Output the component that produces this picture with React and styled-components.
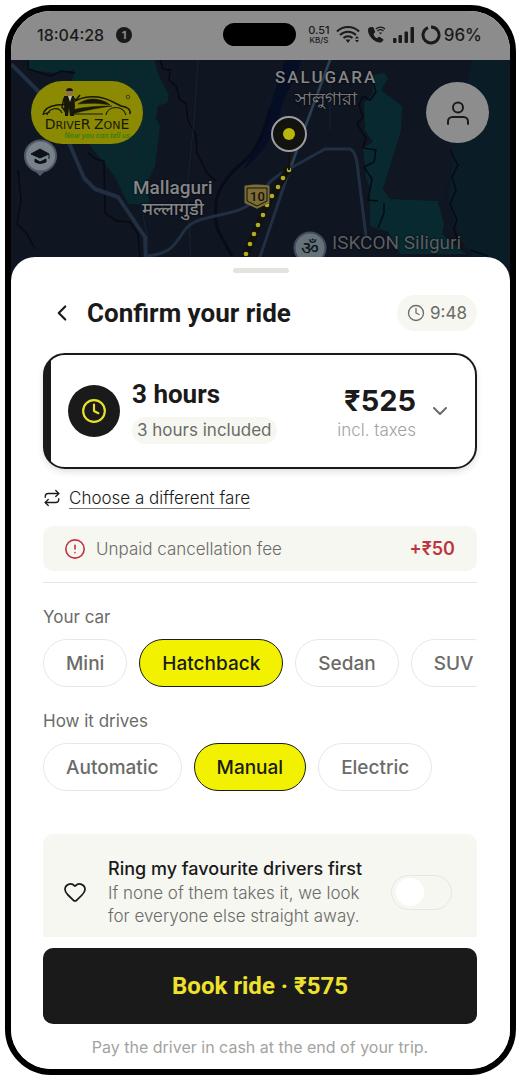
import { useState } from 'react';
import styled, { createGlobalStyle } from 'styled-components';
import { ChevronDown, ChevronLeft, CircleAlert, Clock, Heart, Repeat } from 'lucide-react';

const colours = {
  ink: '#1a1a1a',
  grey: '#6b6b68',
  light: '#a3a3a0',
  line: '#e8e8e2',
  soft: '#f6f7f1',
  yellow: '#f2f200',
  red: '#c0343f',
};

const GlobalStyle = createGlobalStyle`
    * { box-sizing: border-box; }
    body {
        margin: 0;
        background: #fff;
        color: ${colours.ink};
        font-family: Inter, "Noto Sans", sans-serif;
    }
    button, input { font-family: inherit; color: inherit; }
    h1, h2, p { margin: 0; }
`;

const Phone = styled.main`
    display: flex;
    flex-direction: column;
    height: calc(100vh - 10px);
    min-height: 760px;
    margin: 5px;
    border: 6px solid #000;
    border-radius: 46px;
    overflow: hidden;
    background: #fff;
`;

/* status bar */

const StatusBar = styled.header`
    display: grid;
    grid-template-columns: 1fr 73px 1fr;
    align-items: center;
    flex: none;
    height: 49px;
    padding: 0 28px 2px 26px;
    background: #8c8c8c;
    font-weight: 500;
`;

const StatusSide = styled.div`
    display: flex;
    align-items: center;
    justify-content: ${p => (p.$end ? 'flex-end' : 'flex-start')};
    gap: ${p => (p.$end ? '6px' : '12px')};
    font-size: ${p => (p.$end ? '17px' : '16px')};
    white-space: nowrap;
`;

const Island = styled.div`
    height: 23px;
    border-radius: 12px;
    background: #000;
`;

const Count = styled.span`
    width: 16px;
    height: 16px;
    border-radius: 50%;
    background: ${colours.ink};
    color: #8c8c8c;
    font-size: 11px;
    font-weight: 700;
    line-height: 16px;
    text-align: center;
`;

const Speed = styled.span`
    display: flex;
    flex-direction: column;
    align-items: center;
    font-size: 11px;
    line-height: 10px;
    small { font-size: 8px; line-height: 10px; }
`;

const Battery = styled.span`
    display: flex;
    align-items: center;
    gap: 3px;
`;

/* map */

const Map = styled.section`
    position: relative;
    flex: none;
    height: 221px;
    margin-bottom: -24px;
    background: #0f1521;
    overflow: hidden;
`;

const MapArt = styled.svg`
    display: block;
    width: 100%;
    height: 100%;
`;

const Place = styled.div`
    position: absolute;
    left: ${p => p.$x}px;
    top: ${p => p.$y}px;
    color: ${p => (p.$dim ? '#5c5f63' : '#858688')};
    font-family: Roboto, "Noto Sans", sans-serif;
    font-size: 18px;
    font-weight: ${p => (p.$dim ? 400 : 500)};
    line-height: 21px;
    text-align: center;
    text-shadow: 0 0 2px #000;
    white-space: nowrap;
`;

const Area = styled.span`
    font-size: 17px;
    letter-spacing: 2px;
`;

const Town = styled.span`
    font-size: 19px;
`;

const OmSign = styled.span`
    color: #11181d;
    font-size: 19px;
    text-shadow: none;
`;

const RoadNumber = styled.span`
    color: #16140c;
    font-size: 13px;
    text-shadow: none;
`;

const MapBar = styled.div`
    position: absolute;
    inset: 21px 21px auto 20px;
    display: flex;
    justify-content: space-between;
    align-items: center;
`;

const Brand = styled.a`
    display: flex;
    flex-direction: column;
    align-items: center;
    width: 112px;
    height: 63px;
    padding-top: 7px;
    border-radius: 32px;
    background: #8b8a02;
    color: #17170a;
    text-decoration: none;
    svg { display: block; flex: none; }
`;

const BrandName = styled.span`
    font-family: "DejaVu Sans", sans-serif;
    font-size: 11px;
    line-height: 12px;
    white-space: nowrap;
    big { font-size: 14px; line-height: 12px; }
`;

const BrandLine = styled.span`
    align-self: flex-end;
    margin-right: 13px;
    color: #2f7d12;
    font-size: 7px;
    font-style: italic;
    font-weight: 500;
    line-height: 8px;
    white-space: nowrap;
`;

const Profile = styled.button`
    display: grid;
    place-items: center;
    width: 63px;
    height: 61px;
    padding: 0;
    border: 0;
    border-radius: 50%;
    background: #8d8d8e;
`;

/* sheet */

const Sheet = styled.section`
    position: relative;
    display: flex;
    flex-direction: column;
    flex: 1;
    min-height: 0;
    border-radius: 24px 24px 0 0;
    background: #fff;
`;

const Handle = styled.div`
    flex: none;
    width: 56px;
    height: 5px;
    margin: 11px auto 0;
    border-radius: 3px;
    background: #e4e4de;
`;

const Scroll = styled.div`
    flex: 1;
    min-height: 0;
    padding: 22px 33px 0 32px;
    overflow-y: auto;
    scrollbar-width: none;
`;

const Heading = styled.div`
    display: flex;
    align-items: center;
    height: 36px;
`;

const Back = styled.button`
    display: flex;
    margin: 0 12px 0 6px;
    padding: 0;
    border: 0;
    background: none;
`;

const Title = styled.h1`
    flex: 1;
    font-family: Roboto, sans-serif;
    font-size: 26px;
    font-weight: 700;
    line-height: 32px;
`;

const Timer = styled.span`
    display: flex;
    align-items: center;
    gap: 5px;
    height: 36px;
    padding: 0 10px;
    border-radius: 18px;
    background: ${colours.soft};
    color: ${colours.grey};
    font-size: 17px;
`;

const FareCard = styled.button`
    display: flex;
    align-items: center;
    gap: 12px;
    width: 100%;
    height: 116px;
    margin-top: 22px;
    padding: 0 23px;
    border: 2px solid ${colours.ink};
    border-radius: 22px;
    background: linear-gradient(to right, ${colours.ink} 6px, #fff 6px);
    box-shadow: 0 3px 6px rgba(0, 0, 0, 0.12);
    text-align: left;
`;

const FareIcon = styled.span`
    display: grid;
    place-items: center;
    width: 52px;
    height: 52px;
    border-radius: 50%;
    background: ${colours.ink};
    color: #e9e02a;
`;

const FareText = styled.span`
    display: flex;
    flex-direction: column;
    align-items: flex-start;
    gap: 8px;
    flex: 1;
`;

const FareName = styled.span`
    font-family: Roboto, sans-serif;
    font-size: 26px;
    font-weight: 700;
    line-height: 30px;
`;

const Included = styled.span`
    padding: 0 5px;
    border-radius: 14px;
    background: ${colours.soft};
    color: ${colours.grey};
    font-size: 17px;
    line-height: 27px;
    white-space: nowrap;
`;

const Price = styled.span`
    display: grid;
    padding-top: 4px;
    color: ${colours.light};
    font-size: 17px;
    font-weight: 300;
    line-height: 24px;
    text-align: right;
    strong {
        color: ${colours.ink};
        font-size: 29px;
        font-weight: 700;
        line-height: 34px;
    }
`;

const Change = styled.a`
    display: flex;
    align-items: center;
    gap: 8px;
    height: 24px;
    margin-top: 17px;
    color: ${colours.ink};
    font-size: 17px;
    font-weight: 300;
    text-decoration: none;
    span { border-bottom: 1px solid #777; line-height: 20px; }
`;

const Fee = styled.div`
    display: flex;
    align-items: center;
    gap: 10px;
    height: 45px;
    margin-top: 16px;
    padding: 0 22px 0 21px;
    border-radius: 10px;
    background: ${colours.soft};
    color: ${colours.grey};
    font-size: 17px;
    font-weight: 300;
    svg { color: ${colours.red}; }
    strong {
        margin-left: auto;
        color: ${colours.red};
        font-size: 18px;
        font-weight: 600;
    }
`;

const Group = styled.fieldset`
    min-width: 0;
    margin: 22px 0 0;
    padding: 0;
    border: 0;
    legend {
        padding: 0;
        color: ${colours.grey};
        font-size: 17px;
        line-height: 24px;
    }
`;

const Rule = styled.hr`
    margin: 11px 0 0;
    border: 0;
    border-top: 1px solid ${colours.line};
`;

const Chips = styled.div`
    display: flex;
    gap: 12px;
    margin-top: 10px;
    overflow-x: auto;
    scrollbar-width: none;
`;

const Chip = styled.button`
    flex: none;
    height: 48px;
    padding: 0 22px;
    border: 1px solid ${p => (p.$on ? colours.ink : colours.line)};
    border-radius: 24px;
    background: ${p => (p.$on ? colours.yellow : '#fff')};
    color: ${p => (p.$on ? colours.ink : colours.grey)};
    font-size: 19px;
    font-weight: 500;
`;

const Favourite = styled.label`
    display: flex;
    align-items: center;
    gap: 21px;
    margin-top: 43px;
    padding: 22px 25px 22px 20px;
    border-radius: 10px;
    background: ${colours.soft};
    svg { flex: none; }
`;

const FavText = styled.span`
    flex: 1;
    color: ${colours.grey};
    font-size: 17px;
    font-weight: 300;
    line-height: 23px;
    strong {
        display: block;
        color: ${colours.ink};
        font-size: 18px;
        font-weight: 500;
        line-height: 26px;
        white-space: nowrap;
    }
`;

const Toggle = styled.input`
    appearance: none;
    display: flex;
    align-items: center;
    flex: none;
    width: 61px;
    height: 35px;
    margin: 0;
    padding: 0 4px;
    border: 1px solid #e6e7e0;
    border-radius: 18px;
    &::before {
        content: '';
        width: 28px;
        height: 28px;
        border-radius: 50%;
        background: #fff;
    }
    &:checked { justify-content: flex-end; background: ${colours.yellow}; }
`;

const Footer = styled.footer`
    flex: none;
    padding: 11px 33px 10px 32px;
    text-align: center;
    p {
        margin-top: 11px;
        color: ${colours.light};
        font-size: 16px;
        line-height: 24px;
        white-space: nowrap;
    }
`;

const Book = styled.button`
    width: 100%;
    height: 76px;
    border: 0;
    border-radius: 10px;
    background: ${colours.ink};
    && { color: #eee22c; }
    font-family: Roboto, sans-serif;
    font-size: 24px;
    font-weight: 700;
`;

const route = [[289, 170], [283, 178], [278, 187], [272, 196], [267, 205], [263, 215], [258, 225], [254, 234], [250, 244], [246, 254]];

function Wifi() {
  return (
    <svg width="25" height="19" viewBox="0 0 25 19" fill="none" stroke={colours.ink} strokeWidth="2">
      <path d="M1 6.5C7 .5 17 .5 23 6.5M4 10c4.500-4.500 11.500-4.500 16 0M7.500 13c2.500-2.500 6.500-2.500 9 0" />
      <path d="M9.500 14.500h5L12 18zM19 13.500l2-2.500 2 2.500zM19 15l2 2.500 2-2.500z" fill={colours.ink} stroke="none" />
    </svg>
  );
}

function Call() {
  return (
    <svg width="19" height="19" viewBox="0 0 19 19" fill="none" stroke={colours.ink}>
      <path d="M2 3C0 8 5 16 12 17c2 .4 4-.8 4-2.500L12 12l-2 1.800C8 12.800 6.500 11 6 9l1.700-2L6 2.500z" fill={colours.ink} />
      <path d="M9 4c2.500-2.500 6.500-2.500 9 0M10.500 6c2-1.700 4-1.700 6 0" strokeWidth="1.200" />
      <path d="M12 7.500h3l-1.500 2z" fill={colours.ink} stroke="none" />
    </svg>
  );
}

function Signal() {
  return (
    <svg width="23" height="18" viewBox="0 0 23 18" fill={colours.ink}>
      <rect x="1" y="12" width="3.500" height="5" rx="1" />
      <rect x="6.500" y="9" width="3.500" height="8" rx="1" />
      <rect x="12.500" y="5.500" width="3.500" height="11.500" rx="1" />
      <rect x="18.500" y="1" width="3.500" height="16" rx="1" />
    </svg>
  );
}

function Car() {
  return (
    <svg width="92" height="30" viewBox="0 0 92 30" fill="none" stroke="#17170a">
      <path d="M2 27c1-6 6-9 14-10l14-1c8-7 18-8 27-7 10 1 16 6 23 9 6 1 10 3 9 8" strokeWidth="1.500" />
      <path d="M37 16c7-5 15-6 22-4 5 1 8 3 10 5-10-2-21-2-32-1zM31 22c12-3 24-4 40-4-14 2-26 4-40 8z" fill="#17170a" strokeWidth=".5" />
      <path d="M6 27c2-7 12-9 15-2M65 27c2-10 17-10 20 0M31 26h31M3 26l6-2" strokeWidth="1.100" />
      <path d="M30 9l5 3 4-5M23 10l-2 9 3 4V10" strokeWidth="1.500" />
      <path d="M23 8h10l1 10-1 10h-4l-1-8-1 8h-3z" fill="#17170a" stroke="none" />
      <path d="M27 8h4l-2 6z" fill="#b9b9ae" stroke="none" />
      <circle cx="28.500" cy="4" r="3.500" fill="#936a55" stroke="none" />
      <path d="M25 3c0-4 7-4 7 0z" fill="#17170a" stroke="none" />
      <circle cx="87" cy="9" r="1.800" strokeWidth=".6" />
    </svg>
  );
}

function MapDrawing() {
  return (
    <MapArt viewBox="11 60 499 221" preserveAspectRatio="xMidYMin slice" fill="none" aria-hidden="true">
      <path d="M28 60v10l27 3 20-3-4 12 6 45 15 21 23 29 13 27 22 1-4-20 9-19 5-40-4-7 2-13 9-3 2-8-9-17-6-18z" fill="#08282e" />
      <path d="M472 60l-9 40-10 50-5 50 12 40 20 25h40V60z" fill="#0a1c25" />
      <path d="M372 75l12-2 4 5-7 12 21 16-1 25-18 58 7 10 48 2 6 24-2 9 24 20h-66l-12-22-18-6V188l-4-10-3-30 10-6-8-12-1-27 9-10z" fill="#08292f" />
      <path d="M402 131l40-11 20-10-12 60-6 30-54-2-7-9z" fill="#101622" />
      <path d="M285 60h16c-5 21-15 30-20 50-7 28-18 42-38 60 12-20 22-40 26-60z" fill="#060e26" />
      <path d="M270 110c-8 28-14 42-29 54-12 10-22 22-25 38-1 12-1 24 4 32l12 22" stroke="#070c1a" strokeWidth="3" />
      <g stroke="#060a13" strokeWidth="1.500">
        <path d="M88 153l8 6 8 2 1 52 12 8 13 1 8 12 2 23" />
        <path d="M28 60v9l23 7 10-5 14 2" />
        <path d="M160 60l3 9 7 1-1 10 7 6 4 14 6 3 2 18 8 14 1 18 10 20 9 8" />
        <path d="M18 170l3 30-4 24 10 10 8 15" />
        <path d="M372 78l4 14-6 8-7-4-4 9 4 12-6 7 9 14-3 10 13 2-2 12-10 5 8 12-4 21 10 1M384 203v10l-6 15" />
        <path d="M450 150l8 15-6 12 4 13-6 14 7 16-3 9 5 14M470 250l18 6" />
      </g>
      <path d="M128 65l-1 30 4 60 18 90M198 60l-4 60-7 70 4 68M330 80v50" stroke="#182234" />
      <g stroke="#202f42" strokeLinejoin="round">
        <path d="M11 64l27 27 15 29 17 25 14 33 11 11 23 8 27 40 2 45" strokeWidth="4" />
        <path d="M147 256c20-2 26-7 37-25 10-14 25-12 55-21 22-8 22-28 50-41l36-20h25c5 2 7 10 8 22l8 65" strokeWidth="3" />
        <path d="M330 60l-40 108-32 95" strokeWidth="3" />
      </g>
      <path d="M330 60l-26 70-12 35" stroke="#2d4355" strokeWidth="2" />
      <path d="M289 168l-22 37-13 29-10 26" stroke="#11120d" strokeWidth="7" />
      {route.map(([x, y]) => <circle key={y} cx={x} cy={y} r="2.300" fill="#b3ad25" />)}
      <path d="M289 150v20" stroke="#11120d" strokeWidth="2" />
      <circle cx="289" cy="134" r="17" fill="#12120e" stroke="#9c9ca2" strokeWidth="2" />
      <circle cx="289" cy="134" r="6" fill="#b9b60c" />
      <path d="M246 187q11-2 22 0v15l-11 5-11-5z" fill="#7b6d36" stroke="#7b6d36" strokeWidth="3" />
      <path d="M247 188h20v13l-10 5-10-5z" stroke="#17150d" />
      <path d="M25 162l15 14 15-14z" fill="#515768" />
      <circle cx="40.500" cy="156" r="15.500" fill="#778389" stroke="#515768" strokeWidth="2" />
      <path d="M31 154l9-5 9 5-9 4zM35 159v3q5 3 11 0v-3l-6 3zM49 154v5" fill="#0d1218" stroke="#0d1218" />
      <circle cx="310" cy="248" r="15.500" fill="#66727a" stroke="#414b5a" strokeWidth="2" />
    </MapArt>
  );
}

function ChipGroup({ label, options, value, onPick }) {
  return (
    <Group>
      <legend>{label}</legend>
      <Chips>
        {options.map(option => (
          <Chip key={option} type="button" $on={option === value} aria-pressed={option === value} onClick={() => onPick(option)}>
            {option}
          </Chip>
        ))}
      </Chips>
    </Group>
  );
}

function App() {
  const [car, setCar] = useState('Hatchback');
  const [gear, setGear] = useState('Manual');

  return (
    <>
      <GlobalStyle />
      <Phone>
        <StatusBar>
          <StatusSide>18:04:28 <Count>1</Count></StatusSide>
          <Island />
          <StatusSide $end>
            <Speed>0.51<small>KB/S</small></Speed>
            <Wifi />
            <Call />
            <Signal />
            <Battery>
              <svg width="20" height="20" viewBox="0 0 20 20" fill="none" stroke={colours.ink} strokeWidth="3">
                <path d="M10 2a8 8 0 1 1-3 .6" />
              </svg>
              96%
            </Battery>
          </StatusSide>
        </StatusBar>

        <Map>
          <MapDrawing />
          <Place $x={264} $y={6}><Area>SALUGARA</Area><br />সালুগারা</Place>
          <Place $x={122} $y={117}><Town>Mallaguri</Town><br />मल्लागुडी</Place>
          <Place $x={321} $y={172} $dim><Town>ISKCON Siliguri</Town></Place>
          <Place $x={290} $y={178}><OmSign>ॐ</OmSign></Place>
          <Place $x={239} $y={124}><RoadNumber>10</RoadNumber></Place>
          <MapBar>
            <Brand href="#">
              <Car />
              <BrandName><big>D</big>RIVE<big>R</big> <big>Z</big>ON<big>E</big></BrandName>
              <BrandLine>Now you can tell us</BrandLine>
            </Brand>
            <Profile type="button" aria-label="Profile">
              <svg width="24" height="24" viewBox="0 0 24 24" fill="none" stroke={colours.ink} strokeWidth="2" strokeLinecap="round">
                <circle cx="12" cy="6.500" r="5" />
                <path d="M2 23v-2.500a4.500 4.500 0 0 1 4.500-4.500h11a4.500 4.500 0 0 1 4.500 4.500V23" />
              </svg>
            </Profile>
          </MapBar>
        </Map>

        <Sheet>
          <Handle />
          <Scroll>
            <Heading>
              <Back type="button" aria-label="Back"><ChevronLeft size={26} /></Back>
              <Title>Confirm your ride</Title>
              <Timer><Clock size={18} strokeWidth={1.75} />9:48</Timer>
            </Heading>

            <FareCard type="button">
              <FareIcon><Clock size={26} /></FareIcon>
              <FareText>
                <FareName>3 hours</FareName>
                <Included>3 hours included</Included>
              </FareText>
              <Price><strong>₹525</strong>incl. taxes</Price>
              <ChevronDown size={24} color={colours.grey} />
            </FareCard>

            <Change href="#fares"><Repeat size={18} strokeWidth={1.75} /><span>Choose a different fare</span></Change>

            <Fee><CircleAlert size={22} strokeWidth={1.75} />Unpaid cancellation fee<strong>+₹50</strong></Fee>
            <Rule />

            <ChipGroup label="Your car" options={['Mini', 'Hatchback', 'Sedan', 'SUV']} value={car} onPick={setCar} />
            <ChipGroup label="How it drives" options={['Automatic', 'Manual', 'Electric']} value={gear} onPick={setGear} />

            <Favourite>
              <Heart size={24} strokeWidth={1.75} />
              <FavText>
                <strong>Ring my favourite drivers first</strong>
                If none of them takes it, we look for everyone else straight away.
              </FavText>
              <Toggle type="checkbox" />
            </Favourite>
          </Scroll>

          <Footer>
            <Book type="button">Book ride · ₹575</Book>
            <p>Pay the driver in cash at the end of your trip.</p>
          </Footer>
        </Sheet>
      </Phone>
    </>
  );
}

export default App;
